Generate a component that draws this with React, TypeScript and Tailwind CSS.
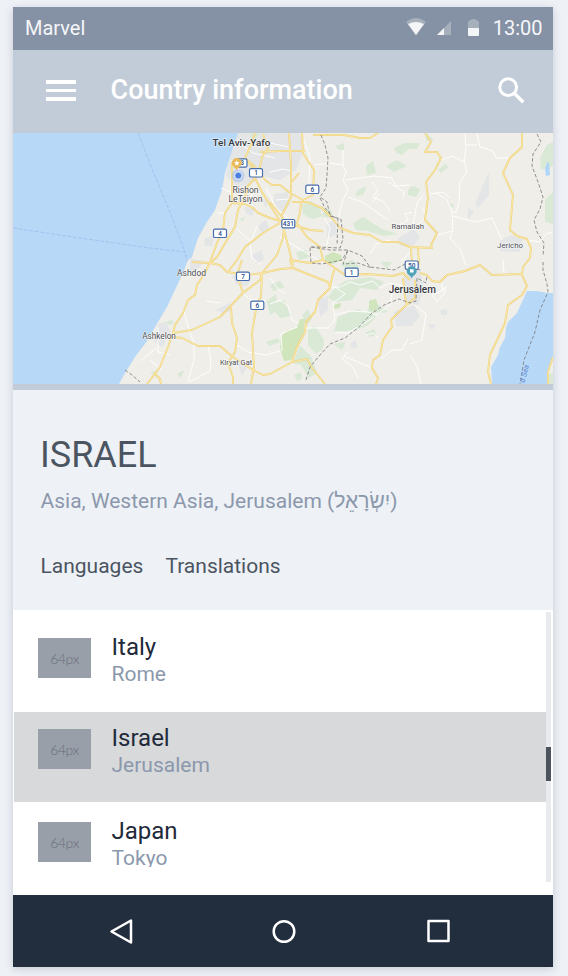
import React from "react";

const sea =
  "13,133 238,133 234,145 230,157 225,173 222,190 215,210 207,222 198,238 192,257 188,260 183,273 167,307 158,322 147,341 135,357 125,373 119,384 13,384";
const deadSea =
  "527,291 537,291 548,293 553,293 553,357 548,372 548,384 492,384 491,367 498,355 500,347 505,338 506,328 508,322 517,313 522,302";

const urban = [
  "238,133 262,133 300,133 304,150 296,170 280,180 262,176 248,186 236,186 226,176 230,157",
  "190,258 205,262 196,270 190,276", "232,276 243,273 251,280 246,286 236,284",
  "158,324 166,322 171,333 162,347 153,341", "237,361 251,362 242,376",
  "318,300 328,296 328,310 320,317", "394,312 414,305 420,316 412,326 396,326",
  "404,274 420,268 424,290 418,305 404,300", "398,238 414,229 420,238 412,247 400,246",
  "500,240 512,235 523,240 519,252 500,251", "327,224 335,220 337,234 327,238",
  "486,178 489,172 489,195 478,208 475,204", "468,207 474,212 468,220",
  "258,226 266,220 269,229 262,234", "244,206 254,209 253,216 246,214",
  "274,194 288,192 290,205 282,213 274,203", "262,200 270,198 266,208",
  "350,344 355,340 358,347 352,349", "440,310 447,309 447,315 441,315",
  "428,324 436,325 432,330", "216,310 230,303 231,311 224,313", "270,136 280,133 282,148 273,150",
  "205,238 215,235 212,246 204,246", "252,255 262,250 264,259 257,264",
];
const greens = [
  "302,205 311,201 320,208 322,216 312,219 303,214", "325,208 331,210 333,218 322,217",
  "358,190 367,186 363,195 355,196", "366,166 373,161 376,173 367,175",
  "386,166 397,160 407,166 394,172", "394,148 404,143 420,143 417,149 409,149 402,155 396,153",
  "336,146 344,143 344,150 338,150", "353,223 363,217 382,229 398,234 383,236 368,231 356,230",
  "408,190 415,186 420,190 416,197 408,195", "540,158 547,145 553,142 553,166 541,170",
  "545,200 553,192 553,224 545,222", "438,170 445,164 449,167 441,173", "448,203 453,204 454,209",
  "410,186 417,189 415,193 410,191", "426,133 434,140 426,141",
  "333,290 345,281 370,277 384,282 377,290 360,288 352,300 336,302 328,298",
  "338,317 358,309 366,313 370,305 376,317 367,326 352,331 334,332",
  "308,330 315,326 324,340 323,349 316,354 308,345",
  "293,363 300,345 312,358 317,373 309,378 301,365", "370,299 377,304 388,312 378,313 369,307",
  "270,306 284,300 292,316 280,318", "270,285 280,281 285,287 273,291",
  "302,315 308,309 312,318 307,326", "165,322 172,320 174,324 169,325",
  "267,301 276,294 277,311 270,315", "177,374 184,370 181,378",
  "294,375 301,372 302,379 297,381", "266,342 278,338 280,342 269,346",
  "340,264 352,260 360,267 348,272", "365,333 374,329 377,335 370,337", "150,373 157,370 157,376",
  "249,133 260,133 256,139", "296,252 306,250 310,257 299,260", "380,262 392,262 387,269",
  "549,374 553,372 553,384 549,384", "333,344 346,342 342,350", "240,219 246,216 242,222",
];
const darkGreens = [
  "281,336 288,330 297,328 300,319 305,319 304,332 296,350 291,360 284,361 280,348",
  "325,256 333,252 341,255 342,260 332,264 325,263", "369,301 376,299 378,306 375,312 369,309",
  "333,305 341,303 340,308 334,309",
];

const roads = [
  "255,133 250,147 245,158 238,162 232,163 232,203 225,213 223,230 217,243 210,262 205,273 197,285 195,295 188,300 183,313 175,325 173,333 168,347 160,367 154,375 147,384",
  "154,373 160,379 161,384",
  "245,158 252,167 255,178 247,187 245,197 238,210 235,227 227,240 217,257 210,263",
  "232,203 245,204 253,208 258,213 270,218 280,221 300,227 310,230 323,231",
  "263,134 268,148 262,157 260,167 255,178 262,192 270,205 280,221",
  "260,152 280,151 305,151",
  "245,158 255,167 265,180 272,185 280,185 290,193 303,200 313,195 314,170 308,161 303,153 302,133",
  "289,133 291,165 291,197 282,215 284,230 290,253 293,265",
  "291,183 299,173", "270,202 282,217",
  "292,202 307,202 322,208 332,218 340,228 353,233 370,235 382,242 398,242 410,247 432,248 431,245 437,233 425,220 428,198 426,182 435,170 441,158 437,152 425,152 431,142 425,133",
  "301,202 300,213 297,223 307,237 320,247 323,260 335,268 345,275 367,274 393,276 403,273 410,280",
  "313,135 344,135 360,138 370,138 378,133",
  "280,223 263,233 245,247 237,260 228,272", "284,227 283,238 277,255 262,273 260,280 243,293 220,317 192,330 173,333",
  "192,262 210,263 220,265 227,272 247,275 263,273 280,269 293,268 310,275 328,282 330,288 318,300 315,312 306,322 305,332 297,347 292,362",
  "242,260 237,275 243,293", "262,273 261,297 257,303 252,333 254,367 251,384",
  "173,337 182,338 198,346 220,346 233,357 253,370 263,375 270,374 292,362 307,359 312,368 325,384",
  "231,307 232,323 237,338 235,352 228,363 233,377 233,384",
  "330,288 332,277 335,268", "293,268 290,260 310,263 323,260",
  "415,280 415,298 403,308 391,320 392,327 383,340 380,355 373,360 372,368 378,378 376,384",
  "403,278 405,297 407,305", "411,247 412,265", "418,247 419,265",
  "522,133 522,147 510,158 503,173 513,195 510,230 517,236 527,239 531,248 530,258 523,267 522,275 527,286 522,295 508,305 505,323 490,355 488,372 491,384",
  "522,274 492,275 480,265 465,271 447,275 440,282 432,281 427,275 420,273",
  "553,357 548,372 548,384",
];
const minor = [
  "343,150 343,165 346,172 343,180 348,190 343,200 340,210 338,222", "315,165 330,163 343,165",
  "345,180 360,178 375,176 392,178 396,186 410,185", "348,197 362,202 374,210 388,220",
  "372,182 378,190 373,197 384,202 390,211", "380,193 372,202", "412,212 405,214 408,220 398,226",
  "270,172 283,169 291,171", "304,140 310,157 309,183", "327,245 330,228 324,217",
  "370,254 376,244 390,240", "388,182 404,192 403,198", "465,133 466,148 464,160 467,172 460,182 459,203 456,212 452,212 447,200 436,193",
  "441,160 452,156 464,162", "477,134 480,147 493,151 496,158 510,158", "466,145 477,145",
  "452,213 453,230 450,238 460,249 466,265", "453,216 475,222 492,218 502,240", "527,240 540,242 546,234 553,232",
  "437,235 453,231", "413,225 417,203 423,196", "430,194 443,192 450,198",
  "184,311 189,330 194,343 194,360 188,381", "208,346 211,360 210,371 197,378 189,382", "206,301 221,303",
  "237,345 248,352 266,355 280,351", "243,293 249,299 266,301", "270,304 280,300 288,306 292,320 298,323",
  "282,351 281,334 290,330 297,327", "330,288 340,287 350,282 360,285 373,281 380,288 390,283 403,286",
  "328,282 345,294 333,303 335,320 328,328 306,328", "334,315 350,311 368,312 376,315 390,305 392,293",
  "335,332 347,333 360,326 374,317", "347,352 342,359 352,366 358,378", "344,356 358,362 370,367",
  "366,335 374,333 378,338", "415,305 426,314 424,327 422,340 410,344", "410,355 417,366 421,384",
  "408,339 402,350 392,350 381,359", "441,282 443,290 432,295 437,302 444,294 446,287 438,293",
  "503,260 504,273", "158,327 158,352 170,355", "141,361 156,348", "150,360 162,370",
  "217,213 226,213", "221,188 230,192", "230,208 232,160 241,173", "235,185 247,200 257,190",
  "250,243 252,258 260,264", "236,228 251,242 257,226", "280,237 310,255 323,263",
  "270,278 278,289 286,294", "422,208 427,216 415,227", "412,250 402,261", "238,142 253,153 275,158",
  "270,143 288,147", "276,200 289,199", "266,188 276,208 288,218",
];
const borders = [
  "321,135 325,145 328,158 327,175 326,188 320,197 327,202 330,216 341,219 343,239 340,248 318,247 310,247 311,263 322,264 342,260 348,250 362,256 370,267 394,270 405,264 420,270",
  "320,198 325,208 332,216 338,219 337,245", "311,247 330,250 348,250 343,264 358,263 372,268",
  "306,380 310,367 320,355 330,344 345,338 359,327 371,314 384,305 399,299 410,303 416,301 417,278 426,283 427,275",
  "537,134 541,142 533,154 532,166 538,182 543,197 540,209 534,220 537,232 544,243 543,256",
  "543,262 543,270 547,284 548,292 540,310 535,332 524,360 520,384",
  "125,370 132,375 140,382",
];

function Shield({ x, y, n, w = 13 }: { x: number; y: number; n: string; w?: number }) {
  return (
    <g>
      <rect x={x - w / 2} y={y - 4.2} width={w} height={8.4} rx={1.6} fill="#fff" stroke="#456cac" strokeWidth={1.2} />
      <text x={x} y={y + 2.3} textAnchor="middle" fontSize={6.5} fontWeight={500} fill="#294b87">
        {n}
      </text>
    </g>
  );
}

function Place({ x, y, s = 8.2, b = false, children }: { x: number; y: number; s?: number; b?: boolean; children: string }) {
  return (
    <text x={x} y={y} textAnchor="middle" fontSize={s} fontWeight={b ? 500 : 400} fill={b ? "#34373b" : "#4c4e52"} stroke="#fff" strokeWidth={1.2} strokeOpacity={0.75} paintOrder="stroke">
      {children}
    </text>
  );
}

function MapView() {
  return (
    <svg viewBox="13 133 540 251" className="block h-[251px] w-[540px] font-['Roboto',sans-serif]" fill="none">
      <rect x="13" y="133" width="540" height="251" fill="#efeee9" />
      {urban.map((p) => <polygon key={p} points={p} fill="#e4e5e7" />)}
      {greens.map((p) => <polygon key={p} points={p} fill="#d9e9d6" />)}
      {darkGreens.map((p) => <polygon key={p} points={p} fill="#d1e5bd" />)}
      <polygon points={sea} fill="#b8d8f8" />
      <polygon points={deadSea} fill="#b8d8f8" />
      <path d="M547 163l2-1 1 13-4 1-1-7z" fill="#b0d5fb" />
      <g stroke="#fff" strokeWidth="0.9" strokeLinejoin="round">
        {minor.map((p) => <polyline key={p} points={p} />)}
      </g>
      <g stroke="#ecd078" strokeWidth="1.9" strokeLinejoin="round">
        {roads.map((p) => <polyline key={p} points={p} />)}
      </g>
      <g stroke="#fdebae" strokeWidth="0.9" strokeLinejoin="round">
        {roads.map((p) => <polyline key={p} points={p} />)}
      </g>
      <g stroke="#777" strokeWidth="0.8" strokeDasharray="3.5 2">
        {borders.map((p) => <polyline key={p} points={p} />)}
      </g>
      <g stroke="#9bb9e8" strokeWidth="0.7" strokeDasharray="4 1.5">
        <polyline points="13,228 80,238 150,248 185,252 187,261" />
        <polyline points="138,133 152,169 170,212 185,252" />
      </g>
      <Shield x={242} y={163} n="3" w={10} />
      <Shield x={256} y={172.8} n="1" />
      <Shield x={312.3} y={189.3} n="6" />
      <Shield x={288.3} y={223.7} n="431" />
      <Shield x={220} y={233.3} n="4" />
      <Shield x={243} y={276.3} n="7" />
      <Shield x={351.7} y={272.3} n="1" />
      <Shield x={257.3} y={305.3} n="6" />
      <Shield x={411.7} y={265.2} n="50" />
      <circle cx="238" cy="175.8" r="6.5" fill="#8fb1ed" fillOpacity="0.4" />
      <circle cx="238.3" cy="175.6" r="3.5" fill="#4c80df" stroke="#fff" strokeWidth="0.7" />
      <path d="M236.7 170.3c-1-2.5-4.900-3.800-4.900-7.200a5 5 0 0 1 10 0c0 3.400-4.100 4.700-5.100 7.200z" fill="#e9bb58" />
      <path d="M236.800 160.300l.8 1.7 1.9.2-1.4 1.3.4 1.9-1.7-.9-1.7.9.4-1.9-1.4-1.3 1.9-.2z" fill="#fff" />
      <path d="M411.7 278.5c-.8-3-5-4-5-7.300a5 5 0 0 1 10 0c0 3.300-4.200 4.300-5 7.300z" fill="#52a3b9" />
      <rect x="410" y="269.3" width="3.6" height="3.2" fill="#fff" />
      <Place x={241.5} y={145.9} s={9.9} b>Tel Aviv-Yafo</Place>
      <Place x={245.5} y={193} s={8.6}>Rishon</Place>
      <Place x={245.5} y={202.3} s={8.6}>LeTsiyon</Place>
      <Place x={191.500} y={276} s={8.5}>Ashdod</Place>
      <Place x={159} y={338.800} s={8.2}>Ashkelon</Place>
      <Place x={236} y={365.4} s={7.4}>Kiryat Gat</Place>
      <Place x={407.7} y={229.2} s={7.8}>Ramallah</Place>
      <Place x={510} y={248.2} s={7.8}>Jericho</Place>
      <Place x={412.300} y={293} s={10} b>Jerusalem</Place>
      <text x="524.500" y="383" fontSize="7.500" fontStyle="italic" fill="#5d88d1" transform="rotate(-76 524.500 383)">d Sea</text>
    </svg>
  );
}

const countries = [
  { name: "Italy", capital: "Rome", row: "h-[102px] pt-[28px]", capitalBox: "h-[26px]" },
  { name: "Israel", capital: "Jerusalem", row: "h-[90px] bg-[#d8d9db] pt-[17px]", capitalBox: "h-[26px]" },
  { name: "Japan", capital: "Tokyo", row: "h-[93px] pt-[20px]", capitalBox: "h-[22px] overflow-hidden" },
];

export default function App() {
  return (
    <div className="h-[976px] w-[568px] overflow-hidden bg-[#eef1f6] pl-[13px] pt-[7px] font-['Roboto',sans-serif]">
      <div className="flex h-[960px] w-[540px] flex-col bg-white shadow-[0_2px_8px_rgba(60,75,95,0.22)]">
        <header className="flex h-[43px] shrink-0 items-center bg-[#8591a4] pl-[12px] pr-[10.500px] text-[20px] text-[#f5f7fa]">
          <span className="-mt-[2px]">Marvel</span>
          <svg viewBox="404 17 76 22" className="ml-auto mr-[12px] -mt-[1px] h-[22px] w-[76px]" fill="#f4f5f6">
            <path d="M405 22q10-8 20 0l-10 13.500z" opacity="0.3" />
            <path d="M407 24q8-4 16 0l-8 11z" />
            <path d="M436 35h14V21z" opacity="0.3" />
            <path d="M436 35h7v-7z" />
            <path d="M467 28v-6l2-2h1.500v-1h4v1h1.500l2 2v6z" opacity="0.3" />
            <path d="M467 28h11v7q0 1-1 1h-9q-1 0-1-1z" />
          </svg>
          <span className="-mt-[2px]">13:00</span>
        </header>
        <div className="flex h-[83px] shrink-0 items-center bg-[#c2ccd8] pl-[33px] pr-[28px] text-white">
          <div className="-mt-[2px] flex w-[30px] flex-col gap-[5px]">
            <i className="h-[3.5px] bg-white" />
            <i className="h-[3.5px] bg-white" />
            <i className="h-[3.5px] bg-white" />
          </div>
          <h1 className="-mt-[3px] ml-[34.500px] text-[27px] font-medium">Country information</h1>
          <svg viewBox="0 0 27 27" className="-mt-[2px] ml-auto h-[27px] w-[27px]" fill="none" stroke="white" strokeWidth="3">
            <circle cx="10.200" cy="10.200" r="8.400" />
            <path d="M16.300 16.300l9 9" strokeWidth="3.400" />
          </svg>
        </div>
        <MapView />
        <div className="h-[6px] shrink-0 bg-[#c2ccd8]" />
        <section className="h-[220px] shrink-0 bg-[#eef1f6] pl-[28px] text-[#4b5561]">
          <h2 className="-ml-px pt-[43px] text-[36px] leading-[44px]">ISRAEL</h2>
          <p className="-ml-[0.5px] mt-[11px] text-[21px] leading-[26px] text-[#8b98ac]">Asia, Western Asia, Jerusalem (יִשְׂרָאֵל)</p>
          <div className="-ml-[0.5px] mt-[39px] flex gap-[22px] text-[21px] leading-[26px]">
            <span>Languages</span>
            <span>Translations</span>
          </div>
        </section>
        <section className="flex h-[285px] shrink-0 bg-white">
          <div className="ml-px w-[532px]">
            {countries.map((c) => (
              <div key={c.name} className={`flex pl-[24px] ${c.row}`}>
                <div className="flex h-[40px] w-[53px] items-center justify-center bg-[#999fa9] font-['Lato',sans-serif] text-[14px] font-light tracking-[-0.4px] text-[#676e79]">
                  64px
                </div>
                <div className="-mt-[5px] ml-[20.5px]">
                  <div className="h-[28px] text-[24px] leading-[28px] text-[#1f2a3a]">{c.name}</div>
                  <div className={`text-[21px] leading-[26px] text-[#8b98ac] ${c.capitalBox}`}>{c.capital}</div>
                </div>
              </div>
            ))}
          </div>
          <div className="mt-[2px] h-[270px] w-[5px] bg-[#e8eaee] pt-[135px]">
            <div className="h-[34px] bg-[#4b535c]" />
          </div>
        </section>
        <nav className="h-[72px] shrink-0 bg-[#222d3e]">
          <svg viewBox="13 895 540 72" className="block h-[72px] w-[540px]" fill="none" stroke="white" strokeWidth="2.500" strokeLinejoin="round">
            <path d="M111.500 931.500L131 920.500v22z" />
            <circle cx="284" cy="931.500" r="10.300" />
            <rect x="428.500" y="921" width="20" height="20" />
          </svg>
        </nav>
      </div>
    </div>
  );
}
